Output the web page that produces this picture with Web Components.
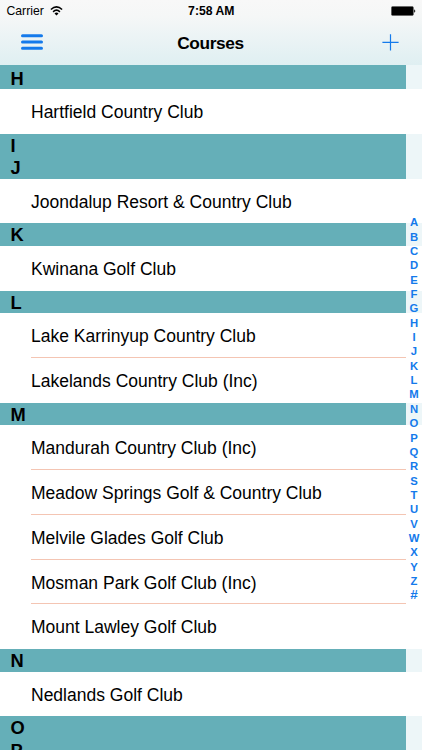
<!DOCTYPE html>
<html lang="en">
<head>
<meta charset="utf-8">
<title>Courses</title>
<style>
  html, body {
    margin: 0;
    height: 100%;
    overflow: hidden;
  }
  body {
    --tint: #147aeb;
    --band: #65afb8;
    --row: 44.82px;
    --head: 22.41px;
    --index-width: 16px;
    font-family: "Liberation Sans", Arial, sans-serif;
    color: #000;
    background: #fff;
  }
</style>
</head>
<body>
<course-app></course-app>

<script>
class StatusBar extends HTMLElement {
  constructor() {
    super();
    this.attachShadow({ mode: "open" });
  }
  connectedCallback() {
    this.shadowRoot.innerHTML = `
    <style>
      :host {
        display: grid;
        grid-template-columns: 1fr auto 1fr;
        align-items: center;
        height: 22px;
        padding: 0 6px 0 6.5px;
        font-size: 12.2px;
      }
      .left { display: flex; align-items: center; gap: 6px; }
      .time { font-weight: bold; font-size: 12.2px; }
      .battery { justify-self: end; }
      svg { display: block; }
    </style>
    <div class="left">
      <span class="carrier">Carrier</span>
      <svg width="13" height="10" viewBox="0 0 13 10" fill="none" stroke="#000" stroke-width="1.6">
        <path d="M0.9 3.5 Q6.5 -1.6 12.1 3.5"/>
        <path d="M3.1 5.8 Q6.5 2.6 9.9 5.8"/>
        <path d="M6.5 9.5 L4.5 7.4 Q6.5 5.7 8.5 7.4 Z" fill="#000" stroke="none"/>
      </svg>
    </div>
    <span class="time">7:58 AM</span>
    <svg class="battery" width="25" height="10" viewBox="0 0 25 10">
      <rect x="0.4" y="0.4" width="22" height="9.2" rx="1.4" fill="#000" stroke="#555" stroke-width="0.5"/>
      <path d="M23.2 3.2 Q25.4 5 23.2 6.8 Z" fill="#000"/>
    </svg>
    `;
  }
}
customElements.define("status-bar", StatusBar);

class NavBar extends HTMLElement {
  constructor() {
    super();
    this.attachShadow({ mode: "open" });
  }
  connectedCallback() {
    this.shadowRoot.innerHTML = `
    <style>
      :host {
        display: grid;
        grid-template-columns: 1fr auto 1fr;
        align-items: center;
        height: 42px;
        padding: 0 23px 0 21px;
        box-sizing: border-box;
      }
      h1 { margin: 0; font-size: 17.3px; line-height: 20px; letter-spacing: -0.35px; padding-left: 1px; }
      button { border: none; background: none; padding: 0; justify-self: start; }
      button.add { justify-self: end; }
      svg { display: block; stroke: var(--tint); }
    </style>
    <button aria-label="Menu">
      <svg width="22" height="18" viewBox="0 0 22 18" stroke-width="3" stroke-linecap="round">
        <path d="M1.5 1.8 H20.5 M1.5 8 H20.5 M1.5 14.2 H20.5"/>
      </svg>
    </button>
    <h1><slot></slot></h1>
    <button class="add" aria-label="Add">
      <svg width="17" height="18" viewBox="0 0 17 18" stroke-width="1.2">
        <path d="M0.4 8.3 H16.6 M8.5 0.2 V16.4"/>
      </svg>
    </button>
    `;
  }
}
customElements.define("nav-bar", NavBar);

class CourseSection extends HTMLElement {
  constructor() {
    super();
    this.attachShadow({ mode: "open" });
  }
  connectedCallback() {
    this.shadowRoot.innerHTML = `
    <style>
      :host { display: block; }
      .head {
        display: flex;
        background: #edf6f8;
        padding-top: var(--lead, 0px);
        height: var(--head);
      }
      h2 {
        flex: 1;
        margin: calc(var(--lead, 0px) * -1) var(--index-width) 0 0;
        padding: var(--lead, 0px) 0 0 10.5px;
        background: var(--band);
        font-size: 18.3px;
        line-height: 24.6px;
        height: var(--head);
      }
    </style>
    <div class="head"><h2>${this.getAttribute("letter")}</h2></div>
    <slot></slot>
    `;
  }
}
customElements.define("course-section", CourseSection);

class CourseRow extends HTMLElement {
  constructor() {
    super();
    this.attachShadow({ mode: "open" });
  }
  connectedCallback() {
    this.shadowRoot.innerHTML = `
    <style>
      :host {
        display: block;
        height: var(--row);
        padding: 0 var(--index-width) 0 31px;
        font-size: 17.5px;
        line-height: 46px;
        white-space: nowrap;
      }
      div { height: 100%; box-sizing: border-box; }
      :host(:not(:last-of-type)) div { border-bottom: 1px solid #f4c5b3; }
    </style>
    <div><slot></slot></div>
    `;
  }
}
customElements.define("course-row", CourseRow);

class LetterIndex extends HTMLElement {
  constructor() {
    super();
    this.attachShadow({ mode: "open" });
  }
  connectedCallback() {
    const letters = [..."ABCDEFGHIJKLMNOPQRSTUVWXYZ#"];
    this.shadowRoot.innerHTML = `
    <style>
      :host {
        display: flex;
        flex-direction: column;
        align-items: center;
        justify-content: center;
        padding-top: 2.6px;
        box-sizing: border-box;
        color: var(--tint);
        font-size: 11.3px;
        font-weight: bold;
      }
      span { height: 14.36px; line-height: 14.36px; }
      span:last-child { font-size: 13.5px; }
    </style>
    ${letters.map((l) => `<span>${l}</span>`).join("")}
    `;
  }
}
customElements.define("letter-index", LetterIndex);

class CourseApp extends HTMLElement {
  constructor() {
    super();
    this.attachShadow({ mode: "open" });
    this.sections = [
      ["H", ["Hartfield Country Club"]],
      ["I", []],
      ["J", ["Joondalup Resort &amp; Country Club"]],
      ["K", ["Kwinana Golf Club"]],
      ["L", ["Lake Karrinyup Country Club", "Lakelands Country Club (Inc)"]],
      ["M", [
        "Mandurah Country Club (Inc)",
        "Meadow Springs Golf &amp; Country Club",
        "Melvile Glades Golf Club",
        "Mosman Park Golf Club (Inc)",
        "Mount Lawley Golf Club",
      ]],
      ["N", ["Nedlands Golf Club"]],
      ["O", []],
      ["P", []],
    ];
  }
  connectedCallback() {
    const list = this.sections
      .map(([letter, names]) => `
      <course-section letter="${letter}">
        ${names.map((name) => `<course-row>${name}</course-row>`).join("")}
      </course-section>`)
      .join("");

    this.shadowRoot.innerHTML = `
    <style>
      :host {
        display: flex;
        flex-direction: column;
        height: 750px;
        overflow: hidden;
      }
      header {
        flex: none;
        height: 65px;
        border-bottom: 1px solid #b4cbd0;
        box-sizing: content-box;
        margin-bottom: -0.6px;
        background: linear-gradient(#f8f8f8 0, #f5f7f7 25%, #dfeff2 100%);
      }
      main {
        flex: 1;
        min-height: 0;
        position: relative;
        overflow: hidden;
      }
      course-section:first-of-type { --lead: 1.2px; }
      /* the index floats over the right edge of the list */
      letter-index {
        position: absolute;
        top: 0;
        right: 0;
        bottom: 0;
        width: var(--index-width);
      }
    </style>
    <header>
      <status-bar></status-bar>
      <nav-bar>Courses</nav-bar>
    </header>
    <main>
      ${list}
      <letter-index></letter-index>
    </main>
    `;
  }
}
customElements.define("course-app", CourseApp);
</script>
</body>
</html>
